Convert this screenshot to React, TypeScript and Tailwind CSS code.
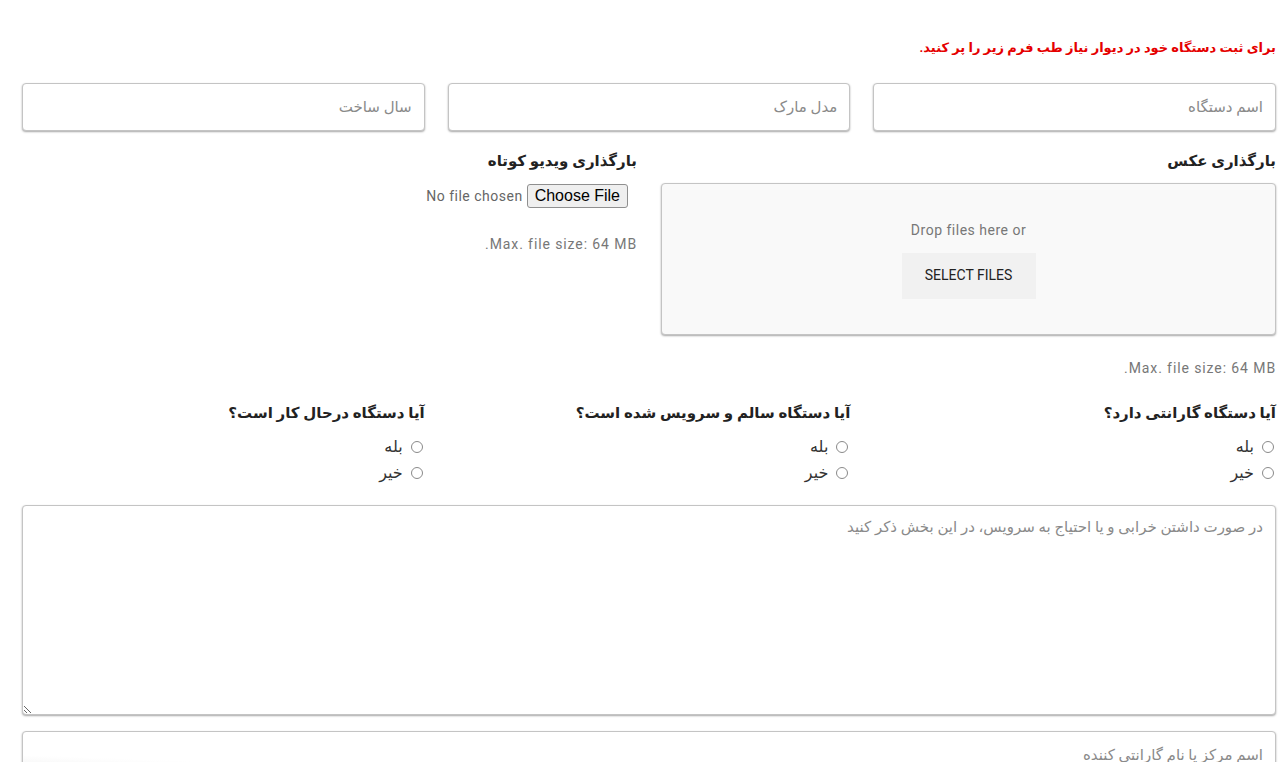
import React from "react";

const fa = "font-['Roboto','DejaVu_Sans',sans-serif]";
const fieldCls =
  "w-full rounded-[4px] border border-[#c4c4c4] bg-white px-3 text-[15px] text-[#333] placeholder:text-[#8a8a8a] shadow-[0_1px_2px_rgba(0,0,0,0.35)] outline-none";

const questions = [
  { title: "آیا دستگاه گارانتی دارد؟", name: "warranty" },
  { title: "آیا دستگاه سالم و سرویس شده است؟", name: "service" },
  { title: "آیا دستگاه درحال کار است؟", name: "working" },
];

function RadioGroup({ title, name }: { title: string; name: string }) {
  return (
    <div className="flex flex-col">
      <h3 className="text-[15px] font-bold leading-[22px] text-[#222]">{title}</h3>
      <div className="mt-[13px] flex flex-col gap-[6px] text-[16px] text-[#333]">
        {["بله", "خیر"].map((opt) => (
          <label key={opt} className="flex h-[20px] items-center gap-[8px] pr-[2px]">
            <span className="inline-block h-[12px] w-[12px] rounded-full border border-[#8a8a8a] bg-white" />
            <span>{opt}</span>
          </label>
        ))}
      </div>
    </div>
  );
}

export default function App() {
  return (
    <div dir="rtl" className={`${fa} min-h-screen bg-white pl-[22px] pr-[4px] pt-[37px]`}>
      <p className="h-[22px] text-[13px] font-bold leading-[22px] text-[#e50000]">
        برای ثبت دستگاه خود در دیوار نیاز طب فرم زیر را پر کنید.
      </p>

      <div className="mt-[24px] grid grid-cols-3 gap-[23px]">
        <input className={`${fieldCls} h-[48px]`} placeholder="اسم دستگاه" />
        <input className={`${fieldCls} h-[48px]`} placeholder="مدل مارک" />
        <input className={`${fieldCls} h-[48px]`} placeholder="سال ساخت" />
      </div>

      <div className="mt-[19px] grid grid-cols-2 gap-[24px]">
        <div className="flex flex-col">
          <h3 className="text-[15px] font-bold leading-[22px] text-[#222]">بارگذاری عکس</h3>
          <div className="mt-[11px] flex h-[152px] flex-col items-center justify-center rounded-[4px] border border-[#c4c4c4] bg-[#f9f9f9] shadow-[0_1px_2px_rgba(0,0,0,0.35)]">
            <span dir="ltr" className="text-[14px] tracking-[0.5px] text-[#777]">
              Drop files here or
            </span>
            <button className="mt-[12px] h-[46px] w-[134px] bg-[#f1f1f1] text-[14px] text-[#222]">
              SELECT FILES
            </button>
          </div>
          <p className="mt-[23px] text-[14px] leading-[20px] tracking-[0.9px] text-[#777]">
            Max. file size: 64 MB.
          </p>
        </div>
        <div className="flex flex-col">
          <h3 className="text-[15px] font-bold leading-[22px] text-[#222]">بارگذاری ویدیو کوتاه</h3>
          <div className="mt-[12px] flex items-center gap-[4px] pr-[9px]">
            <span className="rounded-[3px] border border-[#8f8f8f] bg-[#efefef] px-[7px] text-[16px] leading-[22px] text-black font-['Liberation_Sans',sans-serif]">
              Choose File
            </span>
            <span className="text-[14px] tracking-[0.5px] text-[#666]">No file chosen</span>
          </div>
          <p className="mt-[26px] text-[14px] leading-[20px] tracking-[0.9px] text-[#777]">
            Max. file size: 64 MB.
          </p>
        </div>
      </div>

      <div className="mt-[24px] grid grid-cols-3 gap-[23px]">
        {questions.map((q) => (
          <RadioGroup key={q.name} {...q} />
        ))}
      </div>

      <textarea
        className={`${fieldCls} mt-[22px] block h-[210px] resize py-[10px]`}
        placeholder="در صورت داشتن خرابی و یا احتیاج به سرویس، در این بخش ذکر کنید"
      />

      <input
        className={`${fieldCls} mt-[16px] h-[48px] bg-linear-to-tr from-[#ececec] via-white via-25% to-white`}
        placeholder="اسم مرکز یا نام گارانتی کننده"
      />
    </div>
  );
}
